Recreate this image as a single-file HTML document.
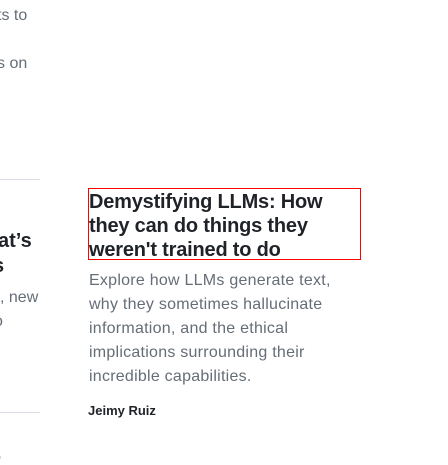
<!DOCTYPE html>
<html><head><meta charset="utf-8"><style>
html,body{margin:0;padding:0;width:448px;height:448px;overflow:hidden;background:#fff;font-family:"Liberation Sans",sans-serif;}
.a{position:absolute;white-space:nowrap;}
.g{color:#656d76;font-size:16px;}
.t{color:#1f2328;font-weight:bold;}
.line{position:absolute;left:0;width:40px;height:1px;background:#d8dee4;}
</style></head><body>
<div class="a g" style="left:-3px;top:7px;">ts to</div>
<div class="a g" style="left:-3px;top:55px;">s on</div>
<div class="line" style="top:179px;"></div>
<div class="a t" style="left:-2px;top:230px;font-size:20px;">at’s</div>
<div class="a t" style="left:-7px;top:255px;font-size:20px;">s</div>
<div class="a g" style="left:0px;top:289px;">, new</div>
<div class="a g" style="left:-6px;top:313px;">o</div>
<div class="line" style="top:412px;"></div>
<div class="a t" style="left:-4px;top:442px;font-size:20px;">.</div>

<div class="a" style="left:88px;top:188px;width:271px;height:70px;border:1px solid #f00;"></div>
<div class="a t" style="left:89px;top:190px;font-size:20px;line-height:24px;letter-spacing:-0.2px;">Demystifying LLMs: How<br>they can do things they<br>weren't trained to do</div>
<div class="a g" style="left:89px;top:269px;line-height:24px;letter-spacing:0.25px;">Explore how LLMs generate text,<br>why they sometimes hallucinate<br>information, and the ethical<br>implications surrounding their<br>incredible capabilities.</div>
<div class="a t" style="left:88px;top:403px;font-size:13px;">Jeimy Ruiz</div>
</body></html>
